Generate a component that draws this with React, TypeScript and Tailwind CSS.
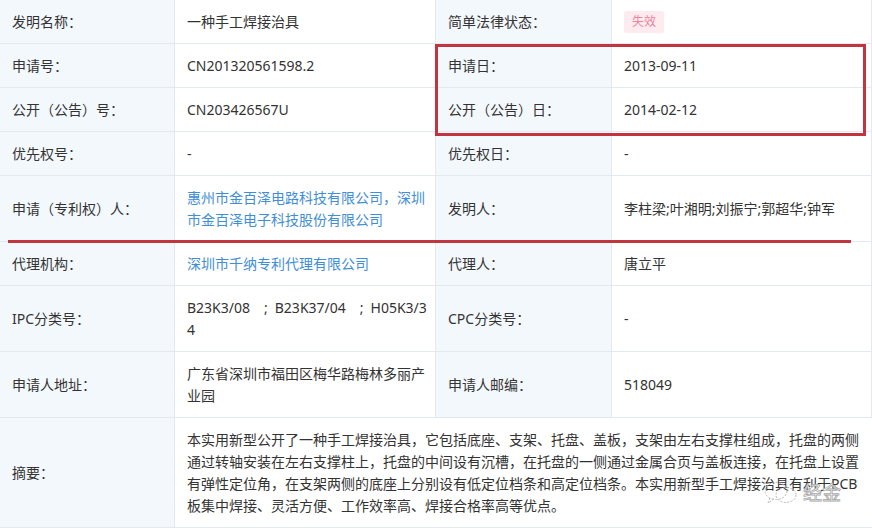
import React from "react";

const cellBase =
  "flex items-center border-b border-r border-[#e4e9ef] pt-[11px] pb-[10px]";

function Label({ children }: { children: React.ReactNode }) {
  return <div className={`${cellBase} bg-[#f3f8fd] pl-3 pr-2`}>{children}</div>;
}

function Value({
  children,
  className = "",
}: {
  children: React.ReactNode;
  className?: string;
}) {
  return <div className={`${cellBase} bg-white pl-3 pr-[9px] ${className}`}>{children}</div>;
}

function Link({ children }: { children: React.ReactNode }) {
  return <span className="text-[#3f8ed8]">{children}</span>;
}

export default function App() {
  return (
    <div className="relative w-[872px] h-[528px] overflow-hidden bg-white font-['Noto_Sans','Noto_Sans_CJK_SC',sans-serif] text-[14px] leading-[22px] text-[#333]">
      <div className="grid grid-cols-[175px_261px_176px_260px]">
        <Label>发明名称：</Label>
        <Value>一种手工焊接治具</Value>
        <Label>简单法律状态：</Label>
        <Value>
          <span className="inline-flex h-[22px] items-center rounded-[2px] bg-[#fdebf0] px-2 text-[12px] text-[#e9849a]">
            失效
          </span>
        </Value>

        <Label>申请号：</Label>
        <Value>CN201320561598.2</Value>
        <Label>申请日：</Label>
        <Value>2013-09-11</Value>

        <Label>公开（公告）号：</Label>
        <Value>CN203426567U</Value>
        <Label>公开（公告）日：</Label>
        <Value>2014-02-12</Value>

        <Label>优先权号：</Label>
        <Value>-</Value>
        <Label>优先权日：</Label>
        <Value>-</Value>

        <Label>申请（专利权）人：</Label>
        <Value>
          <Link>惠州市金百泽电路科技有限公司，深圳市金百泽电子科技股份有限公司</Link>
        </Value>
        <Label>发明人：</Label>
        <Value>李柱梁;叶湘明;刘振宁;郭超华;钟军</Value>

        <Label>代理机构：</Label>
        <Value>
          <Link>深圳市千纳专利代理有限公司</Link>
        </Value>
        <Label>代理人：</Label>
        <Value>唐立平</Value>

        <Label>IPC分类号：</Label>
        <Value>
          <span className="whitespace-pre">
            {"B23K3/08\u2003;\u2002B23K37/04\u2003;\u2002H05K3/3"}
            <br />4
          </span>
        </Value>
        <Label>CPC分类号：</Label>
        <Value>-</Value>

        <Label>申请人地址：</Label>
        <Value>广东省深圳市福田区梅华路梅林多丽产业园</Value>
        <Label>申请人邮编：</Label>
        <Value>518049</Value>

        <Label>摘要：</Label>
        <div className="col-span-3 border-b border-[#e4e9ef] pl-3 pr-[10px] pt-[11px] pb-[10px]">
          本实用新型公开了一种手工焊接治具，它包括底座、支架、托盘、盖板，支架由左右支撑柱组成，托盘的两侧通过转轴安装在左右支撑柱上，托盘的中间设有沉槽，在托盘的一侧通过金属合页与盖板连接，在托盘上设置有弹性定位角，在支架两侧的底座上分别设有低定位档条和高定位档条。本实用新型手工焊接治具有利于PCB板集中焊接、灵活方便、工作效率高、焊接合格率高等优点。
        </div>
      </div>

      {/* red annotation box */}
      <div className="pointer-events-none absolute left-[435px] top-[44px] h-[92px] w-[431px] border-[3px] border-[#c13440]" />
      {/* red annotation underline */}
      <div className="pointer-events-none absolute left-[8px] top-[240px] h-[3px] w-[843px] bg-[#c13440]" />

      {/* watermark */}
      <div className="pointer-events-none absolute left-[762px] top-[481px] flex items-center gap-[3px]">
        <svg width="38" height="24" viewBox="0 0 38 24" fill="none" stroke="#b9b9b9" strokeWidth="1" strokeDasharray="2 1.5">
          <ellipse cx="14" cy="10" rx="11" ry="8.5" />
          <ellipse cx="24" cy="14" rx="10" ry="7.5" />
          <path d="M8 17 L6 22 L12 18" />
        </svg>
        <span className="text-[19px] leading-[20px] text-white [-webkit-text-stroke:0.8px_#a9a9a9]">
          经金
        </span>
      </div>
    </div>
  );
}
